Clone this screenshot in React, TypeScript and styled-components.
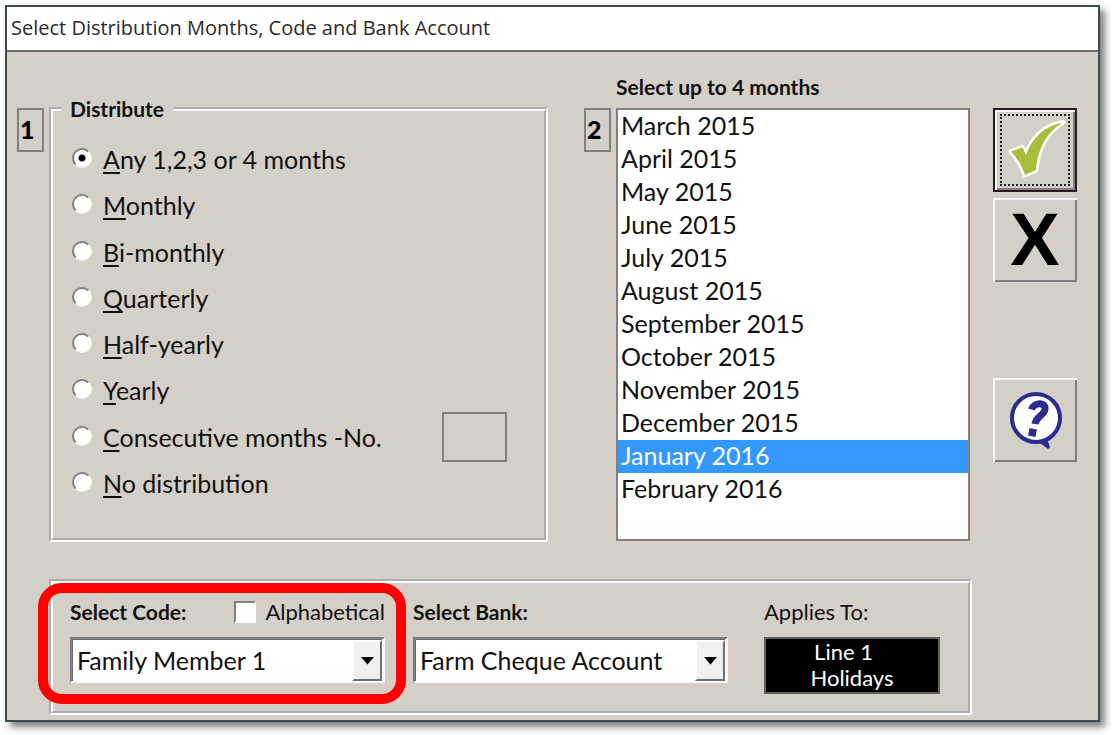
import React, { useState } from "react";
import styled, { createGlobalStyle } from "styled-components";

const face = "#d4d0c8";
const ink = "#111111";

const GlobalStyle = createGlobalStyle`
  *, *::before, *::after { box-sizing: border-box; }
  body {
    margin: 0;
    background: #ffffff;
    color: ${ink};
    font-family: Lato, "Open Sans", sans-serif;
    font-size: 25px;
    line-height: 32px;
  }
  input, select, button { font: inherit; color: inherit; }
`;

const Page = styled.div`
  padding: 5px 12px 13px 5px;
`;

const Dialog = styled.main`
  background: ${face};
  border: 2px solid #3d4c54;
  box-shadow: 5px 5px 7px rgba(0, 0, 0, 0.5);
`;

const TitleBar = styled.h1`
  margin: 0;
  padding: 0 4px;
  height: 45px;
  border-bottom: 2px solid #6f6f6f;
  background: #ffffff;
  color: #2b2b2b;
  font: 400 20px/41px "Open Sans", "Noto Sans", sans-serif;
`;

const Body = styled.div`
  display: flex;
  gap: 21px;
  padding: 24px 21px 5px 10px;
`;

const Content = styled.div`
  flex: 1;
  min-width: 0;
`;

const Upper = styled.div`
  display: flex;
  gap: 36px;
  padding-right: 2px;
`;

const Step = styled.section<{ $grow: number }>`
  flex: ${(p) => p.$grow} 1 0;
  min-width: 0;
  display: grid;
  grid-template-columns: 27px minmax(0, 1fr);
  grid-template-rows: 32px auto;
  column-gap: 5px;
`;

const StepHeading = styled.label`
  grid-column: 2;
  font-size: 21px;
  line-height: 22px;
  font-weight: 700;
`;

const Badge = styled.div`
  grid-column: 1;
  grid-row: 2;
  height: 44px;
  padding-left: 1px;
  border: 2px solid #808080;
  color: #000000;
  font-weight: 900;
  line-height: 38px;
`;

const Group = styled.fieldset`
  min-width: 0;
  margin: 0;
  padding: 0 17px;
  border: 4px groove #ffffff;
`;

const DistributeGroup = styled(Group)`
  grid-column: 2;
  grid-row: 2;
  height: 446px;
  margin-top: -12px;
`;

const Legend = styled.legend`
  margin-left: -9px;
  padding: 0 9px;
  font-size: 21px;
  line-height: 26px;
  font-weight: 700;
`;

const RadioList = styled.div`
  display: grid;
  grid-template-rows: repeat(8, minmax(0, 1fr));
  height: 370px;
  margin-top: 14px;
`;

const RadioRow = styled.div`
  display: flex;
  align-items: center;
  justify-content: space-between;
  padding-right: 20px;
`;

const RadioLabel = styled.label`
  display: flex;
  align-items: center;
  gap: 11px;
  white-space: nowrap;
`;

const Radio = styled.input.attrs({ type: "radio" })`
  appearance: none;
  flex: none;
  width: 20px;
  height: 20px;
  margin: 0 0 2px 2px;
  border: 2px solid;
  border-color: #808080 #f8f8f8 #f8f8f8 #808080;
  border-radius: 50%;
  background: #ffffff;
  &:checked {
    background: radial-gradient(circle, #000000 3px, #ffffff 4px);
  }
`;

const AccessKey = styled.span`
  text-decoration: underline;
  text-decoration-thickness: 2px;
  text-underline-offset: 3px;
  text-decoration-skip-ink: none;
`;

const CountBox = styled.input`
  flex: none;
  width: 65px;
  height: 50px;
  border: 2px solid #808080;
  background: ${face};
  text-align: center;
`;

const MonthList = styled.select`
  grid-column: 2;
  grid-row: 2;
  width: 100%;
  height: 433px;
  margin: 0;
  padding: 0;
  border: 2px solid #808080;
  border-radius: 0;
  background: #ffffff;
  overflow: hidden;
  outline: none;
  option {
    height: 33px;
    padding: 0 3px;
    line-height: 32px;
  }
  option:checked {
    background: linear-gradient(#3399ff, #3399ff);
    color: #ffffff;
    -webkit-text-fill-color: #ffffff;
  }
`;

const AccountGroup = styled(Group)`
  display: flex;
  margin: 37px 0 0 32px;
  height: 136px;
  padding: 17px 28px 0 17px;
`;

const Field = styled.div`
  position: relative;
  flex: 1 1 0;
  min-width: 0;
  height: 83px;
  margin-right: 28px;
`;

const FieldHead = styled.div`
  display: flex;
  align-items: center;
  justify-content: space-between;
  height: 24px;
  margin-bottom: 13px;
  font-size: 22px;
  line-height: 24px;
  white-space: nowrap;
`;

const StrongLabel = styled.label`
  font-size: 21px;
  font-weight: 700;
`;

const CheckLabel = styled.label`
  display: flex;
  align-items: center;
  gap: 9px;
`;

const CheckBox = styled.input.attrs({ type: "checkbox" })`
  appearance: none;
  width: 22px;
  height: 22px;
  margin: 0;
  border: 2px solid;
  border-color: #808080 #ffffff #ffffff #808080;
  background: #ffffff;
  &:checked {
    background: #404040;
  }
`;

const Combo = styled.div`
  display: grid;
  grid-template-columns: minmax(0, 1fr) 30px;
  height: 46px;
  padding-right: 1px;
  border: 2px solid;
  border-color: #808080 #f8f8f8 #f8f8f8 #808080;
  background: #ffffff;
`;

const ComboSelect = styled.select`
  appearance: none;
  grid-column: 1 / 3;
  grid-row: 1;
  min-width: 0;
  height: 42px;
  padding: 0 34px 2px 4px;
  border: 1px solid #6a6a6a;
  border-width: 1px 0 0 1px;
  border-radius: 0;
  background: #ffffff;
  outline: none;
`;

const ComboArrow = styled.span`
  grid-column: 2;
  grid-row: 1;
  display: flex;
  align-items: center;
  justify-content: center;
  margin-top: 1px;
  border: 2px solid;
  border-color: #ffffff #707070 #707070 #ffffff;
  background: #f0f0f0;
  pointer-events: none;
`;

const Highlight = styled.div`
  position: absolute;
  inset: -17px -21px -21px -32px;
  border: 10px solid #ff0000;
  border-radius: 24px;
  pointer-events: none;
`;

const AppliesTo = styled.div`
  flex: none;
  width: 176px;
  margin-left: 8px;
`;

const AppliesBox = styled.output`
  display: block;
  height: 57px;
  border: 2px solid #606060;
  background: #000000;
  color: #ffffff;
  font-size: 22px;
  line-height: 26px;
  text-align: center;
`;

const Actions = styled.div`
  flex: none;
  width: 84px;
  padding-top: 32px;
  display: flex;
  flex-direction: column;
  gap: 6px;
`;

const ActionButton = styled.button<{ $default?: boolean; $apart?: boolean }>`
  display: flex;
  align-items: center;
  justify-content: center;
  width: 84px;
  height: 84px;
  margin: ${(p) => (p.$apart ? "90px" : "0")} 0 0;
  padding: 0;
  border: ${(p) => (p.$default ? "2px solid #2a1a1c" : "0")};
  background: ${face};
  box-shadow: inset 2px 2px 0 #f6f6f6, inset -2px -2px 0 #808080;
`;

const FocusRing = styled.span`
  display: flex;
  align-items: center;
  justify-content: center;
  width: 70px;
  height: 72px;
  border: 2px dotted #222222;
`;

const Cross = styled.span`
  font: 700 74px/84px "Liberation Sans", Arial, sans-serif;
  color: #000000;
`;

const options = [
  "Any 1,2,3 or 4 months",
  "Monthly",
  "Bi-monthly",
  "Quarterly",
  "Half-yearly",
  "Yearly",
  "Consecutive months -No.",
  "No distribution",
];

const months = [
  "March 2015",
  "April 2015",
  "May 2015",
  "June 2015",
  "July 2015",
  "August 2015",
  "September 2015",
  "October 2015",
  "November 2015",
  "December 2015",
  "January 2016",
  "February 2016",
];

function TickIcon() {
  return (
    <svg width="60" height="60" viewBox="0 0 60 60" overflow="visible" aria-hidden="true">
      <path
        d="M6 31.5 L17.5 27.5 L21 35 C27 18 39 6 57.5 2.5 C42 13 33 27 31 50 L20 55 C17 46 12 38 6 31.5 Z"
        fill="#a9bd3b"
        stroke="#ffffff"
        strokeWidth="5"
        strokeLinejoin="round"
        paintOrder="stroke"
      />
    </svg>
  );
}

function HelpIcon() {
  return (
    <svg width="60" height="64" viewBox="0 1 60 64" aria-hidden="true">
      <path d="M31 53 L43 62 L45 60 L41 49 Z" fill="#2b2c90" />
      <circle cx="31" cy="31" r="24" fill="#ffffff" stroke="#2b2c90" strokeWidth="4" />
      <path
        d="M26.5 22.5 C28.5 15.5 41 14.5 40 22 C39.5 29 31 28.5 30 37"
        fill="none"
        stroke="#2b2c90"
        strokeWidth="7"
      />
      <path d="M24.5 41 L32 42.5 L30.5 50 L23 48.5 Z" fill="#2b2c90" />
    </svg>
  );
}

function ComboBox({ id, items }: { id: string; items: string[] }) {
  return (
    <Combo>
      <ComboSelect id={id}>
        {items.map((item) => (
          <option key={item}>{item}</option>
        ))}
      </ComboSelect>
      <ComboArrow>
        <svg width="13" height="8" viewBox="0 0 13 8" aria-hidden="true">
          <path d="M0 0 H13 L6.5 7.5 Z" fill="#000000" />
        </svg>
      </ComboArrow>
    </Combo>
  );
}

export default function App() {
  const [choice, setChoice] = useState(0);
  const [picked, setPicked] = useState<string[]>(["January 2016"]);

  return (
    <Page>
      <GlobalStyle />
      <Dialog>
        <TitleBar>Select Distribution Months, Code and Bank Account</TitleBar>
        <Body>
          <Content>
            <Upper>
              <Step $grow={531}>
                <Badge>1</Badge>
                <DistributeGroup>
                  <Legend>Distribute</Legend>
                  <RadioList>
                    {options.map((text, i) => (
                      <RadioRow key={text}>
                        <RadioLabel>
                          <Radio
                            name="distribute"
                            checked={choice === i}
                            onChange={() => setChoice(i)}
                          />
                          <span>
                            <AccessKey>{text[0]}</AccessKey>
                            {text.slice(1)}
                          </span>
                        </RadioLabel>
                        {text.startsWith("Consecutive") && (
                          <CountBox type="text" aria-label="Number of consecutive months" />
                        )}
                      </RadioRow>
                    ))}
                  </RadioList>
                </DistributeGroup>
              </Step>
              <Step $grow={386}>
                <StepHeading htmlFor="months">Select up to 4 months</StepHeading>
                <Badge>2</Badge>
                <MonthList
                  id="months"
                  multiple
                  size={12}
                  value={picked}
                  onChange={(e) =>
                    setPicked(Array.from(e.target.selectedOptions, (o) => o.value).slice(0, 4))
                  }
                >
                  {months.map((m) => (
                    <option key={m}>{m}</option>
                  ))}
                </MonthList>
              </Step>
            </Upper>
            <AccountGroup aria-label="Code and bank account">
              <Field>
                <FieldHead>
                  <StrongLabel htmlFor="code">Select Code:</StrongLabel>
                  <CheckLabel>
                    <CheckBox />
                    Alphabetical
                  </CheckLabel>
                </FieldHead>
                <ComboBox id="code" items={["Family Member 1"]} />
                <Highlight />
              </Field>
              <Field>
                <FieldHead>
                  <StrongLabel htmlFor="bank">Select Bank:</StrongLabel>
                </FieldHead>
                <ComboBox id="bank" items={["Farm Cheque Account"]} />
              </Field>
              <AppliesTo>
                <FieldHead>
                  <label htmlFor="applies">Applies To:</label>
                </FieldHead>
                <AppliesBox id="applies">
                  Line 1{"\u00a0\u00a0\u00a0"}
                  <br />
                  Holidays
                </AppliesBox>
              </AppliesTo>
            </AccountGroup>
          </Content>
          <Actions>
            <ActionButton type="button" aria-label="OK" $default>
              <FocusRing>
                <TickIcon />
              </FocusRing>
            </ActionButton>
            <ActionButton type="button" aria-label="Cancel">
              <Cross>X</Cross>
            </ActionButton>
            <ActionButton type="button" aria-label="Help" $apart>
              <HelpIcon />
            </ActionButton>
          </Actions>
        </Body>
      </Dialog>
    </Page>
  );
}
